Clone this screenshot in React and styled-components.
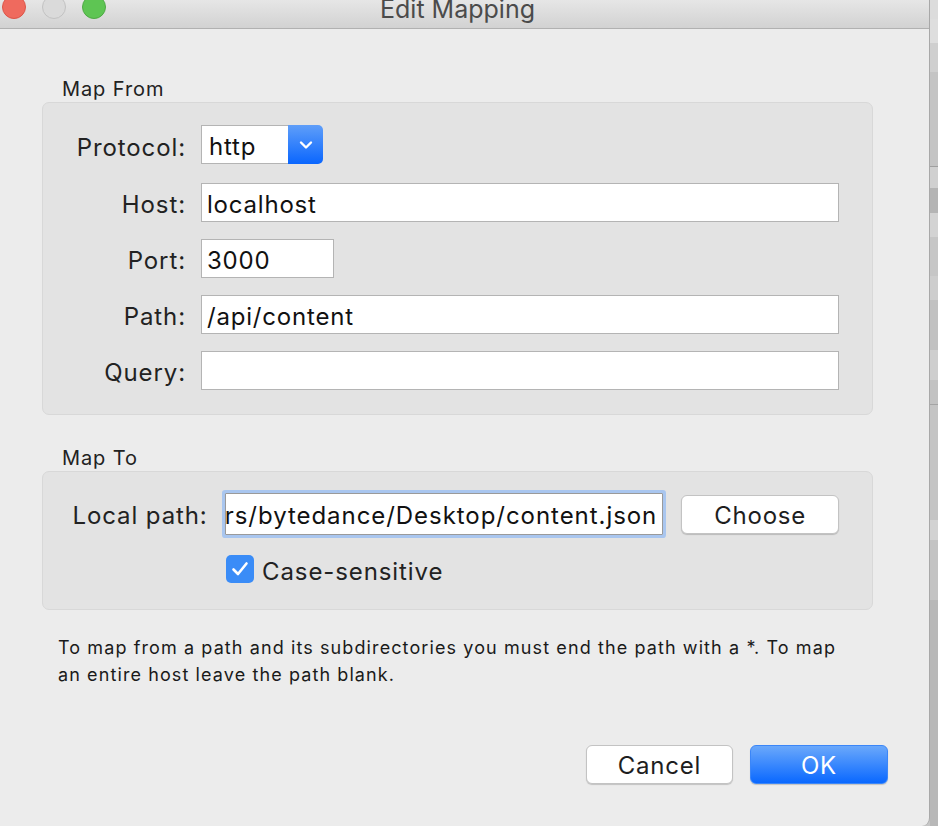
import React from "react";
import styled, { createGlobalStyle } from "styled-components";

const Global = createGlobalStyle`
  html, body {
    margin: 0;
    padding: 0;
    background: #c6c6c6;
    overflow: hidden;
  }
  body {
    font-family: Inter, "Liberation Sans", sans-serif;
    -webkit-font-smoothing: antialiased;
  }
`;

const Page = styled.div`
  display: flex;
  width: 938px;
  height: 826px;
  overflow: hidden;
`;

const Window = styled.div`
  width: 929px;
  height: 826px;
  flex-shrink: 0;
  background: #ececec;
  border-right: 1px solid #a8a8a8;
  border-bottom-right-radius: 8px;
  display: flex;
  flex-direction: column;
  overflow: hidden;
`;

const Backdrop = styled.div`
  flex: 1;
  background: linear-gradient(
    to bottom,
    #dcdcdc 0 19px,
    #dedede 19px 43px,
    #cfcfcf 43px 72px,
    #c4c4c4 72px 166px,
    #9f9f9f 166px 167px,
    #d0d0d0 167px 188px,
    #b4b4b4 188px 213px,
    #d3d3d3 213px 237px,
    #c6c6c6 237px 276px,
    #cdcdcd 276px 300px,
    #c1c1c1 300px 350px,
    #cecece 350px 380px,
    #c2c2c2 380px 404px,
    #a4a4a4 404px 405px,
    #c4c4c4 405px 520px,
    #d2d2d2 520px 540px,
    #c3c3c3 540px 600px,
    #b8b8b8 600px 826px
  );
`;

const TitleBar = styled.div`
  height: 28px;
  flex-shrink: 0;
  display: flex;
  align-items: flex-start;
  background: linear-gradient(to bottom, #e6e6e6, #d2d2d2);
  border-bottom: 1px solid #b1b1b1;
`;

const Lights = styled.div`
  width: 110px;
  display: flex;
  gap: 16px;
  padding-left: 2px;
  margin-top: -5px;
`;

const Light = styled.span`
  width: 22px;
  height: 22px;
  border-radius: 50%;
  background: ${(p) => p.color};
  border: 1px solid ${(p) => p.edge};
`;

const Title = styled.div`
  flex: 1;
  padding-right: 126px;
  text-align: center;
  font-size: 25px;
  line-height: 25px;
  margin-top: -3px;
  color: #4b4b4b;
`;

const Content = styled.div`
  padding: 48px 56px 0 42px;
  display: flex;
  flex-direction: column;
`;

const SectionTitle = styled.div`
  font-size: 20px;
  letter-spacing: 0.9px;
  line-height: 24px;
  color: #222;
  padding-left: 20px;
  margin-bottom: 1px;
`;

const Panel = styled.div`
  background: #e3e3e3;
  border: 1px solid #d8d8d8;
  border-radius: 7px;
  padding: ${(p) => p.pad};
  margin-bottom: ${(p) => p.mb || 0}px;
`;

const FormGrid = styled.div`
  display: grid;
  grid-template-columns: 143px 1fr;
  column-gap: 15px;
  row-gap: 17px;
  align-items: center;
`;

const Label = styled.label`
  font-size: 24px;
  letter-spacing: 0.9px;
  color: #222;
  text-align: right;
  white-space: nowrap;
  padding-top: 3px;
`;

const TextInput = styled.div`
  height: 37px;
  width: ${(p) => p.w || "auto"};
  background: #fff;
  border: 1px solid #b4b4b4;
  font-size: 24px;
  letter-spacing: 0.8px;
  line-height: 41px;
  padding-left: 5px;
  color: #111;
  white-space: nowrap;
  overflow: hidden;
  box-sizing: content-box;
`;

const Select = styled.div`
  display: flex;
  width: 122px;
  height: 39px;
  margin-bottom: 2px;
`;

const SelectValue = styled.div`
  flex: 1;
  background: #fff;
  border: 1px solid #b4b4b4;
  border-right: none;
  font-size: 24px;
  letter-spacing: 0.8px;
  line-height: 41px;
  padding-left: 7px;
  color: #111;
  overflow: hidden;
`;

const SelectArrow = styled.div`
  width: 35px;
  background: linear-gradient(to bottom, #5f9ef9, #0a66fe);
  border-radius: 0 5px 5px 0;
  display: flex;
  align-items: center;
  justify-content: center;
`;

const Row = styled.div`
  display: flex;
  align-items: center;
`;

const RowLabel = styled(Label)`
  width: 180px;
  padding-right: 14px;
  box-sizing: border-box;
`;

const FocusField = styled.div`
  width: 435px;
  height: 40px;
  background: #fff;
  border: 1px solid #9a9a9a;
  box-shadow: 0 0 0 3px #a9c6ef;
  border-radius: 1px;
  margin-left: 3px;
  font-size: 24px;
  letter-spacing: 0.95px;
  line-height: 44px;
  color: #111;
  white-space: nowrap;
  overflow: hidden;
  display: flex;
  justify-content: flex-end;
  padding-right: 5px;
  box-sizing: content-box;
`;

const Button = styled.button`
  height: 39px;
  width: ${(p) => p.w}px;
  margin-left: ${(p) => p.ml || 0}px;
  font-family: Inter, "Liberation Sans", sans-serif;
  font-size: 24px;
  letter-spacing: 0.8px;
  border-radius: 6px;
  padding: 2px 0 0;
  cursor: pointer;
  color: ${(p) => (p.primary ? "#fff" : "#1e1e1e")};
  background: ${(p) =>
    p.primary ? "linear-gradient(to bottom, #6aa8fb, #0a68ff)" : "#fff"};
  border: 1px solid ${(p) => (p.primary ? "#3b86f8" : "#c3c3c3")};
  box-shadow: 0 1px 1px rgba(0, 0, 0, 0.18);
`;

const CheckRow = styled.div`
  display: flex;
  align-items: center;
  height: 28px;
  gap: 8px;
  margin-top: 20px;
  padding-left: 183px;
`;

const Check = styled.span`
  width: 28px;
  height: 28px;
  border-radius: 5px;
  background: #3a8cf7;
  display: flex;
  align-items: center;
  justify-content: center;
`;

const CheckLabel = styled.span`
  font-size: 24px;
  letter-spacing: 0.9px;
  line-height: 22px;
  padding-top: 6px;
  color: #222;
`;

const Help = styled.p`
  margin: 24px 0 0 16px;
  font-size: 18px;
  letter-spacing: 1.1px;
  line-height: 27px;
  color: #1a1a1a;
  white-space: nowrap;
`;

const Footer = styled.div`
  display: flex;
  justify-content: flex-end;
  gap: 17px;
  margin-top: 57px;
  margin-right: -15px;
`;

const App = () => {
  return (
    <>
      <Global />
      <Page>
        <Window>
          <TitleBar>
            <Lights>
              <Light color="#ef6a5e" edge="#dc5447" />
              <Light color="#dadada" edge="#c2c2c2" />
              <Light color="#5ec553" edge="#4ea944" />
            </Lights>
            <Title>Edit Mapping</Title>
          </TitleBar>
          <Content>
            <SectionTitle>Map From</SectionTitle>
            <Panel pad="22px 33px 24px 0" mb={31}>
              <FormGrid>
                <Label>Protocol:</Label>
                <Select>
                  <SelectValue>http</SelectValue>
                  <SelectArrow>
                    <svg width="14" height="10" viewBox="0 0 14 10">
                      <path
                        d="M2 2.5 L7 7.5 L12 2.5"
                        fill="none"
                        stroke="#fff"
                        strokeWidth="2.4"
                        strokeLinecap="round"
                        strokeLinejoin="round"
                      />
                    </svg>
                  </SelectArrow>
                </Select>
                <Label>Host:</Label>
                <TextInput>localhost</TextInput>
                <Label>Port:</Label>
                <TextInput w="126px">3000</TextInput>
                <Label>Path:</Label>
                <TextInput>/api/content</TextInput>
                <Label>Query:</Label>
                <TextInput />
              </FormGrid>
            </Panel>
            <SectionTitle>Map To</SectionTitle>
            <Panel pad="21px 33px 26px 0">
              <Row>
                <RowLabel>Local path:</RowLabel>
                <FocusField>
                  <span>rs/bytedance/Desktop/content.json</span>
                </FocusField>
                <Button w={159} ml={18}>
                  Choose
                </Button>
              </Row>
              <CheckRow>
                <Check>
                  <svg width="18" height="16" viewBox="0 0 18 16">
                    <path
                      d="M2.5 8.5 L7 13 L15.5 2.5"
                      fill="none"
                      stroke="#fff"
                      strokeWidth="2.6"
                      strokeLinecap="round"
                      strokeLinejoin="round"
                    />
                  </svg>
                </Check>
                <CheckLabel>Case-sensitive</CheckLabel>
              </CheckRow>
            </Panel>
            <Help>
              To map from a path and its subdirectories you must end the path
              with a *. To map
              <br />
              an entire host leave the path blank.
            </Help>
            <Footer>
              <Button w={147}>Cancel</Button>
              <Button w={138} primary>
                OK
              </Button>
            </Footer>
          </Content>
        </Window>
        <Backdrop />
      </Page>
    </>
  );
};

export default App;
